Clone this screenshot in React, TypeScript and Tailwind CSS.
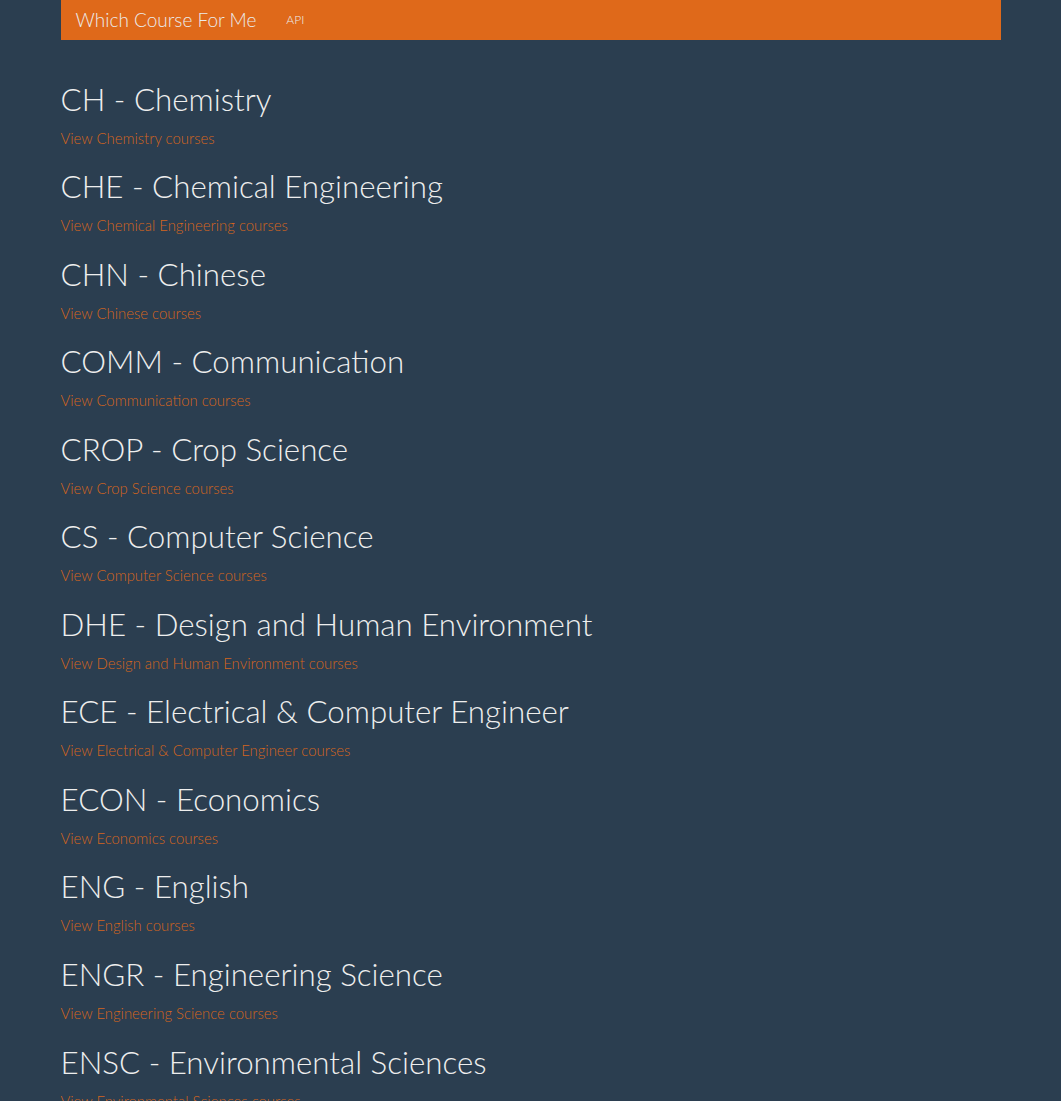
import React from "react";

const subjects: [string, string][] = [
  ["CH", "Chemistry"],
  ["CHE", "Chemical Engineering"],
  ["CHN", "Chinese"],
  ["COMM", "Communication"],
  ["CROP", "Crop Science"],
  ["CS", "Computer Science"],
  ["DHE", "Design and Human Environment"],
  ["ECE", "Electrical & Computer Engineer"],
  ["ECON", "Economics"],
  ["ENG", "English"],
  ["ENGR", "Engineering Science"],
  ["ENSC", "Environmental Sciences"],
];

export default function App() {
  return (
    <div
      className="min-h-[1101px] bg-[#2b3e50] text-[#ebebeb] font-light"
      style={{ fontFamily: "Lato, 'Open Sans', sans-serif" }}
    >
      <div className="mx-auto w-[940px]">
        <nav className="flex h-[40px] items-center bg-[#df691a]">
          <a className="px-[15px] text-[19px] leading-[40px] text-[#ebebeb]">Which Course For Me</a>
          <a className="px-[15px] text-[12px] leading-[40px] text-[#ebebeb]">API</a>
        </nav>
        <div className="pt-[42.5px]">
          {subjects.map(([code, name]) => (
            <div key={code} className="h-[87.55px]">
              <h2 className="text-[31.3px] leading-[33px] font-light text-[#eeeeee]">
                {code} - {name}
              </h2>
              <a className="mt-[12px] block text-[14.9px] leading-[21px] text-[#d4651d]">
                View {name} courses
              </a>
            </div>
          ))}
        </div>
      </div>
    </div>
  );
}
